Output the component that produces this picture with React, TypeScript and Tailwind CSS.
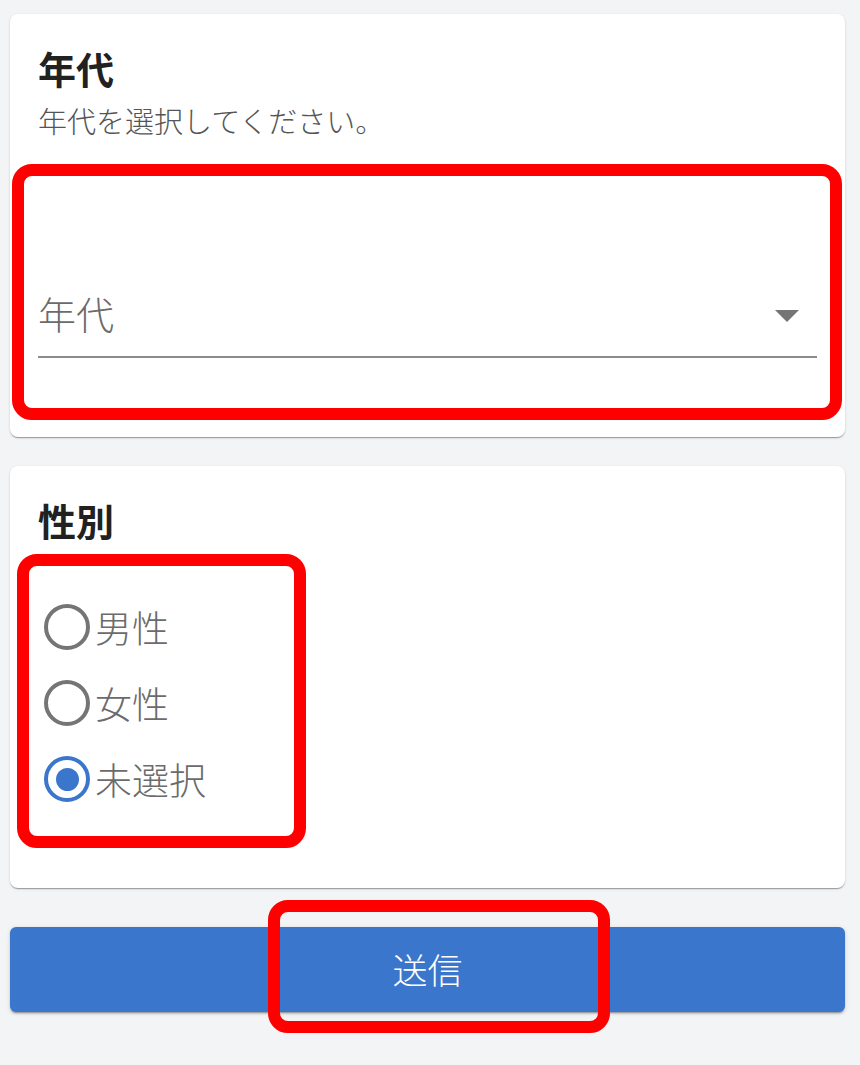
import React, { useState } from 'react';

const font = { fontFamily: '"Noto Sans CJK JP", "Noto Sans", sans-serif' };

const genders = ['男性', '女性', '未選択'];

const Radio: React.FC<{ checked: boolean }> = ({ checked }) =>
  checked ? (
    <span className="flex h-[46px] w-[46px] items-center justify-center rounded-full border-[4px] border-[#3a76cb]">
      <span className="h-[23px] w-[23px] rounded-full bg-[#3a76cb]" />
    </span>
  ) : (
    <span className="h-[46px] w-[46px] rounded-full border-[4px] border-[#757575]" />
  );

export default function App() {
  const [gender, setGender] = useState('未選択');

  return (
    <div className="relative min-h-[1065px] bg-[#f3f4f6] pl-[10px] pr-[15px] pt-[14px]" style={font}>
      {/* 年代 card */}
      <div className="rounded-[8px] bg-white px-[28px] pb-[79px] pt-[32px] shadow-[0_2px_1px_-1px_rgba(0,0,0,0.2),0_1px_1px_0_rgba(0,0,0,0.14),0_1px_3px_0_rgba(0,0,0,0.12)]">
        <h2 className="text-[38px] font-bold leading-[43px] text-[#212121]">年代</h2>
        <p className="mt-[11px] text-[29px] font-light leading-[40px] text-[#555555]">年代を選択してください。</p>
        <div className="pt-[149px]">
          <div className="flex items-center justify-between border-b-2 border-[#8c8c8c] pb-[19px]">
            <span className="text-[38px] font-light leading-[48px] text-[#6b6b6b]">年代</span>
            <svg width="24" height="12" viewBox="0 0 24 12" className="mr-[18px] mt-[6px]">
              <path d="M0 0h24L12 12z" fill="#757575" />
            </svg>
          </div>
        </div>
      </div>

      {/* 性別 card */}
      <div className="mt-[29px] rounded-[8px] bg-white px-[28px] pb-[71px] pt-[32px] shadow-[0_2px_1px_-1px_rgba(0,0,0,0.2),0_1px_1px_0_rgba(0,0,0,0.14),0_1px_3px_0_rgba(0,0,0,0.12)]">
        <h2 className="text-[38px] font-bold leading-[43px] text-[#212121]">性別</h2>
        <div className="mt-[48px] flex flex-col pl-[6px]">
          {genders.map((g) => (
            <label
              key={g}
              className="flex h-[76px] cursor-pointer items-center gap-[5px]"
              onClick={() => setGender(g)}
            >
              <Radio checked={gender === g} />
              <span className="text-[37px] font-light leading-[48px] text-[#6b6b6b]">{g}</span>
            </label>
          ))}
        </div>
      </div>

      <button className="mt-[39px] flex h-[85px] w-full items-center justify-center rounded-[6px] bg-[#3a76cb] text-[35px] font-light text-white shadow-[0_3px_1px_-2px_rgba(0,0,0,0.2),0_2px_2px_0_rgba(0,0,0,0.14),0_1px_5px_0_rgba(0,0,0,0.12)]">
        送信
      </button>

      {/* red annotation boxes */}
      <div className="pointer-events-none absolute left-[12px] top-[164px] h-[256px] w-[830px] rounded-[20px] border-[12px] border-[#ff0000]" />
      <div className="pointer-events-none absolute left-[17px] top-[554px] h-[294px] w-[289px] rounded-[20px] border-[12px] border-[#ff0000]" />
      <div className="pointer-events-none absolute left-[268px] top-[900px] h-[133px] w-[342px] rounded-[20px] border-[12px] border-[#ff0000]" />
    </div>
  );
}
